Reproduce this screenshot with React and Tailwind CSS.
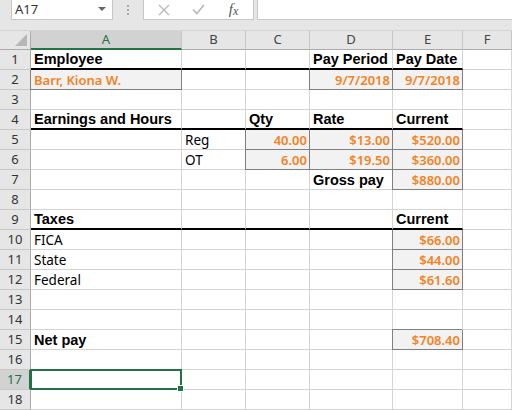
import React from "react";

const COLS = ["w-[151px]", "w-[64px]", "w-[64px]", "w-[83px]", "w-[70px]", "flex-1"];
const LETTERS = ["A", "B", "C", "D", "E", "F"];

const ROWS = [
  { thick: true, cells: { 0: { t: "Employee", h: 1 }, 3: { t: "Pay Period", h: 1 }, 4: { t: "Pay Date", h: 1 } } },
  {
    cells: {
      0: { t: "Barr, Kiona W.", o: 1, box: "l" },
      3: { t: "9/7/2018", o: 1, r: 1, box: "l" },
      4: { t: "9/7/2018", o: 1, r: 1, box: "l" },
    },
  },
  { cells: {} },
  {
    thick: true,
    cells: { 0: { t: "Earnings and Hours", h: 1 }, 2: { t: "Qty", h: 1 }, 3: { t: "Rate", h: 1 }, 4: { t: "Current", h: 1 } },
  },
  {
    cells: {
      1: { t: "Reg" },
      2: { t: "40.00", o: 1, r: 1, box: "l" },
      3: { t: "$13.00", o: 1, r: 1, box: "l" },
      4: { t: "$520.00", o: 1, r: 1, box: "l" },
    },
  },
  {
    cells: {
      1: { t: "OT" },
      2: { t: "6.00", o: 1, r: 1, box: "l" },
      3: { t: "$19.50", o: 1, r: 1, box: "l" },
      4: { t: "$360.00", o: 1, r: 1, box: "l" },
    },
  },
  { cells: { 3: { t: "Gross pay", h: 1 }, 4: { t: "$880.00", o: 1, r: 1, box: "l" } } },
  { cells: {} },
  { thick: true, cells: { 0: { t: "Taxes", h: 1 }, 4: { t: "Current", h: 1 } } },
  { cells: { 0: { t: "FICA" }, 4: { t: "$66.00", o: 1, r: 1, box: "l" } } },
  { cells: { 0: { t: "State" }, 4: { t: "$44.00", o: 1, r: 1, box: "l" } } },
  { cells: { 0: { t: "Federal" }, 4: { t: "$61.60", o: 1, r: 1, box: "l" } } },
  { cells: {} },
  { cells: {} },
  { cells: { 0: { t: "Net pay", h: 1 }, 4: { t: "$708.40", o: 1, r: 1, box: "lt" } } },
  { cells: {} },
  { cells: {}, selected: true },
  { cells: {} },
];

function Cell({ col, spec, thick, selected }) {
  const boxed = spec && spec.box;
  const border = boxed ? "border-r border-b border-[#7f7f7f]" : "border-r border-b border-[#d4d4d4]";
  const thickCls = thick && col < 5 ? "border-b-2 border-b-black" : "";
  const shadow =
    spec && spec.box === "lt"
      ? "shadow-[-1px_0_0_0_#7f7f7f,-1px_-1px_0_0_#7f7f7f]"
      : spec && spec.box === "l"
      ? "shadow-[-1px_0_0_0_#7f7f7f]"
      : "";
  const bg = boxed ? "bg-[#f2f2f2]" : "bg-white";
  let text = null;
  if (spec && spec.t) {
    const font = spec.h
      ? "font-['Liberation_Sans',sans-serif] font-bold text-[14.5px] text-black"
      : spec.o
      ? "font-['Noto_Sans',sans-serif] font-semibold text-[13px] text-[#f5821f]"
      : "font-['Noto_Sans',sans-serif] text-[13.5px] text-black";
    text = (
      <span className={`${font} ${spec.r ? "ml-auto pr-[2px]" : "pl-[3px]"} whitespace-nowrap leading-[18px]`}>{spec.t}</span>
    );
  }
  return (
    <div className={`${COLS[col]} h-[20px] ${border} ${thickCls} ${shadow} ${bg} relative flex items-end shrink-0 box-border`}>
      {text}
      {selected && col === 0 && (
        <div className="absolute -left-[1px] -top-[1px] -right-[1px] -bottom-[1px] border-2 border-[#217346] z-10">
          <div className="absolute -right-[4px] -bottom-[4px] w-[7px] h-[7px] bg-[#217346] border border-white" />
        </div>
      )}
    </div>
  );
}

export default function App() {
  return (
    <div className="w-[512px] h-[410px] overflow-hidden bg-white font-['Noto_Sans',sans-serif]">
      {/* formula bar */}
      <div className="h-[30px] bg-[#e6e6e6] flex items-start">
        <div className="ml-[11px] w-[102px] h-[20px] bg-white border border-t-0 border-[#c6c6c6] flex items-center">
          <span className="pl-[3px] text-[13px] text-[#333]">A17</span>
          <svg className="ml-auto mr-[6px]" width="8" height="5" viewBox="0 0 8 5">
            <path d="M0 0 H8 L4 4 Z" fill="#666" />
          </svg>
        </div>
        <div className="w-[30px] h-[20px] flex flex-col items-center justify-center gap-[2px]">
          <div className="w-[2px] h-[2px] bg-[#a6a6a6]" />
          <div className="w-[2px] h-[2px] bg-[#a6a6a6]" />
          <div className="w-[2px] h-[2px] bg-[#a6a6a6]" />
        </div>
        <div className="w-[111px] h-[20px] bg-white border border-t-0 border-[#c6c6c6] flex pl-[2px]">
          <div className="w-[35px] flex items-center justify-center">
            <svg width="12" height="12" viewBox="0 0 12 12">
              <path d="M1 1 L11 11 M11 1 L1 11" stroke="#b9b9b9" strokeWidth="1.3" />
            </svg>
          </div>
          <div className="w-[35px] flex items-center justify-center">
            <svg width="13" height="11" viewBox="0 0 13 11">
              <path d="M1 5.5 L4.8 9.5 L12 1" stroke="#b9b9b9" strokeWidth="1.7" fill="none" />
            </svg>
          </div>
          <div className="w-[35px] flex items-center justify-center font-['Liberation_Serif',serif] italic text-[15px] text-[#555] leading-none">
            f<span className="text-[12px] -mb-[3px]">x</span>
          </div>
        </div>
        <div className="ml-[3px] flex-1 h-[20px] bg-white border border-t-0 border-r-0 border-[#c6c6c6]" />
      </div>

      {/* column headers */}
      <div className="flex h-[20px] bg-[#e6e6e6] border-t border-[#d4d4d4]">
        <div className="w-[31px] h-full border-r border-b border-[#ababab] relative shrink-0">
          <svg className="absolute right-[3px] bottom-[3px]" width="12" height="12" viewBox="0 0 12 12">
            <path d="M12 0 V12 H0 Z" fill="#b7b7b7" />
          </svg>
        </div>
        {LETTERS.map((l, i) => (
          <div
            key={l}
            className={`${COLS[i]} shrink-0 h-full border-r border-[#c6c6c6] flex items-center justify-center text-[13px] ${
              i === 0 ? "bg-[#d2d2d2] border-b-2 border-b-[#217346] text-[#217346]" : "border-b border-b-[#ababab] text-[#444]"
            }`}
          >
            {l}
          </div>
        ))}
      </div>

      {/* rows */}
      {ROWS.map((row, ri) => (
        <div key={ri} className="flex">
          <div
            className={`w-[31px] h-[20px] shrink-0 border-b border-[#c8c8c8] flex items-center justify-center text-[13px] ${
              row.selected
                ? "bg-[#d2d2d2] border-r-2 border-r-[#217346] text-[#217346]"
                : "bg-[#e6e6e6] border-r border-r-[#ababab] text-[#333]"
            }`}
          >
            {ri + 1}
          </div>
          {COLS.map((_, ci) => (
            <Cell key={ci} col={ci} spec={row.cells[ci]} thick={row.thick} selected={row.selected} />
          ))}
        </div>
      ))}
    </div>
  );
}
